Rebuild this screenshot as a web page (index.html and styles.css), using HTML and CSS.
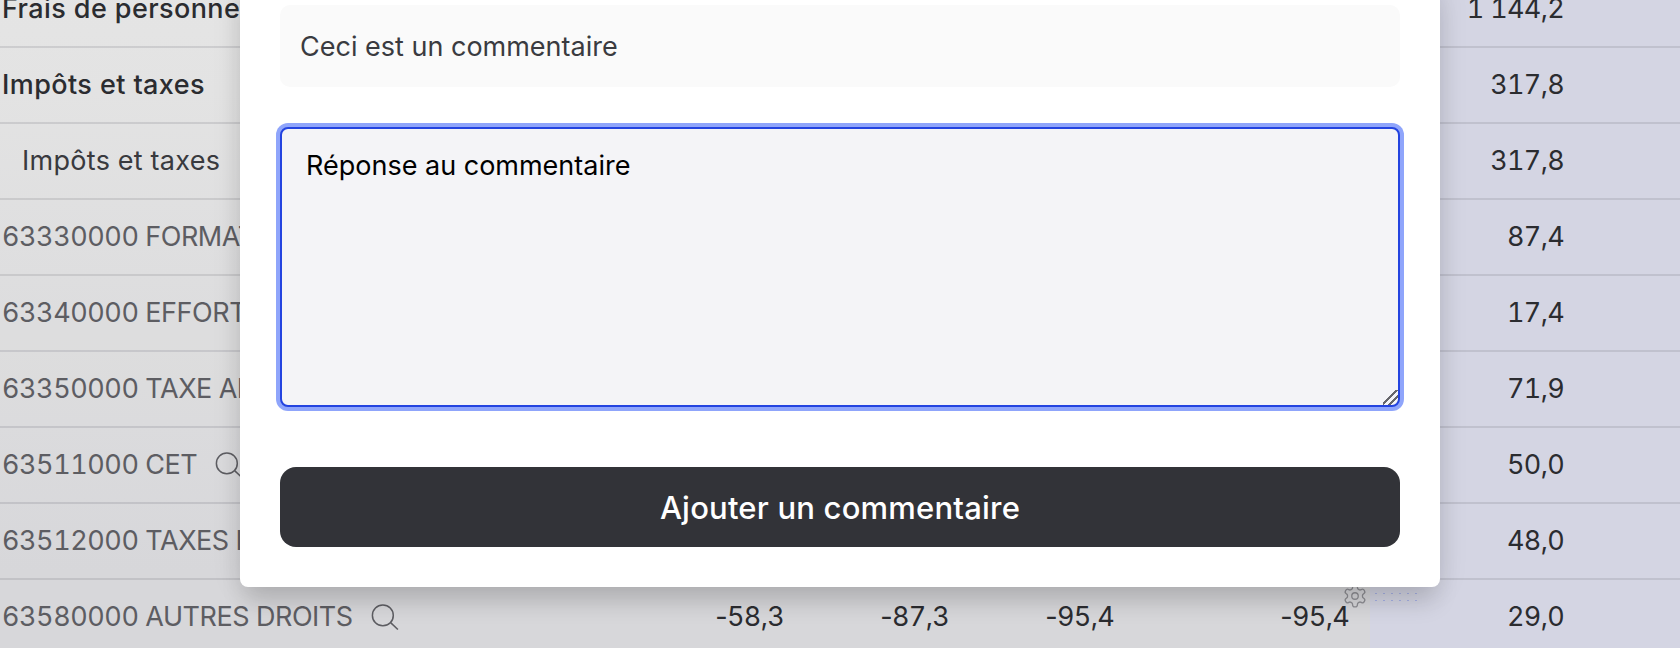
FILE: index.html
```html
<!DOCTYPE html>
<html lang="fr">
<head>
<meta charset="utf-8">
<title>Commentaires</title>
<link rel="stylesheet" href="styles.css">
</head>
<body>
<main class="table">
  <div class="row strong"><span class="name">Frais de personnel</span><span></span><span></span><span></span><span></span><span></span><span class="num total">1 144,2</span></div>
  <div class="row strong"><span class="name">Impôts et taxes</span><span></span><span></span><span></span><span></span><span></span><span class="num total">317,8</span></div>
  <div class="row"><span class="name sub">Impôts et taxes</span><span></span><span></span><span></span><span></span><span></span><span class="num total">317,8</span></div>
  <div class="row"><span class="name acc">63330000 FORMATION</span><span></span><span></span><span></span><span></span><span></span><span class="num total">87,4</span></div>
  <div class="row"><span class="name acc">63340000 EFFORT</span><span></span><span></span><span></span><span></span><span></span><span class="num total">17,4</span></div>
  <div class="row"><span class="name acc">63350000 TAXE APPRENTISSAGE</span><span></span><span></span><span></span><span></span><span></span><span class="num total">71,9</span></div>
  <div class="row"><span class="name acc">63511000 CET<svg class="search" viewBox="0 0 26 24"><circle cx="11" cy="10.5" r="9.7"/><path d="M18.2 17.2 25 23.6"/></svg></span><span></span><span></span><span></span><span></span><span></span><span class="num total">50,0</span></div>
  <div class="row"><span class="name acc">63512000 TAXES FONCIÈRES</span><span></span><span></span><span></span><span></span><span></span><span class="num total">48,0</span></div>
  <div class="row last"><span class="name acc">63580000 AUTRES DROITS<svg class="search" viewBox="0 0 26 24"><circle cx="11" cy="10.5" r="9.7"/><path d="M18.2 17.2 25 23.6"/></svg></span><span class="num"><b class="minus">-</b>58,3</span><span class="num"><b class="minus">-</b>87,3</span><span class="num"><b class="minus">-</b>95,4</span><span class="num"><b class="minus">-</b>95,4</span><span></span><span class="num total">29,0</span>
    <svg class="gear" viewBox="0 0 24 24"><path d="M12.22 2h-.44a2 2 0 0 0-2 2v.18a2 2 0 0 1-1 1.73l-.43.25a2 2 0 0 1-2 0l-.15-.08a2 2 0 0 0-2.73.73l-.22.38a2 2 0 0 0 .73 2.73l.15.1a2 2 0 0 1 1 1.72v.51a2 2 0 0 1-1 1.74l-.15.09a2 2 0 0 0-.73 2.73l.22.38a2 2 0 0 0 2.73.73l.15-.08a2 2 0 0 1 2 0l.43.25a2 2 0 0 1 1 1.73V20a2 2 0 0 0 2 2h.44a2 2 0 0 0 2-2v-.18a2 2 0 0 1 1-1.73l.43-.25a2 2 0 0 1 2 0l.15.08a2 2 0 0 0 2.73-.73l.22-.39a2 2 0 0 0-.73-2.73l-.15-.08a2 2 0 0 1-1-1.74v-.5a2 2 0 0 1 1-1.74l.15-.09a2 2 0 0 0 .73-2.73l-.22-.38a2 2 0 0 0-2.73-.73l-.15.08a2 2 0 0 1-2 0l-.43-.25a2 2 0 0 1-1-1.73V4a2 2 0 0 0-2-2z"/><circle cx="12" cy="12" r="3"/></svg>
    <i class="dots"></i>
  </div>
</main>
<div class="overlay"></div>
<section class="modal">
  <p class="comment">Ceci est un commentaire</p>
  <textarea class="reply">Réponse au commentaire</textarea>
  <button class="submit">Ajouter un commentaire</button>
</section>
</body>
</html>
```
FILE: styles.css
```css
* { box-sizing: border-box; }
html, body { margin: 0; height: 648px; overflow: hidden; }
body { position: relative; font-family: Inter, "Liberation Sans", sans-serif; color: #303136; }

.table {
  margin-top: -29px;
  background:
    linear-gradient(to right, transparent 1370px, #edeefd 1370px),
    linear-gradient(to bottom, #ffffff 0, #fdfdfd 120px, #f0f0f3 600px);
}
.row {
  display: grid;
  grid-template-columns: 620px 164px 165px 165px 235px 21px 310px;
  align-items: center;
  height: 76px;
  border-bottom: 2px solid rgba(60, 60, 80, .13);
  font-size: 27px;
  font-variant-numeric: tabular-nums;
  position: relative;
  top: 1px;
}
.row > span { display: flex; align-items: center; white-space: nowrap; padding-bottom: 1px; }
.num { justify-content: flex-end; letter-spacing: -.7px; }
.minus { font-weight: 400; font-variant-numeric: normal; }
.total { padding-right: 116px; }
.name { padding-left: 2px; letter-spacing: .3px; }
.strong .name { font-weight: 500; letter-spacing: .4px; }
.sub { padding-left: 22px; color: #404146; }
.acc { color: #68686e; letter-spacing: -.45px; }
.search { width: 28px; height: 26px; margin-left: 18px; fill: none; stroke: #68686e; stroke-width: 1.4; }
.gear { position: absolute; left: 1342px; top: 3px; width: 26px; height: 26px; fill: none; stroke: #a0a0a6; stroke-width: 1.2; }
.dots {
  position: absolute; left: 1372px; top: 10px; width: 48px; height: 16px;
  background: radial-gradient(circle, rgba(90, 120, 255, .35) 0 .7px, transparent 1px) 0 0 / 8px 7px;
}

.overlay { position: absolute; inset: 0; background: rgba(0, 0, 0, .1); }
.modal {
  position: absolute;
  left: 240px; top: -20px; bottom: 61px; width: 1200px;
  display: flex; flex-direction: column;
  padding: 25px 40px 40px;
  background: #fff;
  border-radius: 8px;
  box-shadow: 0 20px 25px -5px rgba(0, 0, 0, .14), 0 0 30px rgba(0, 0, 0, .1);
}
.comment {
  margin: 0 0 40px; height: 82px; padding: 0 20px;
  display: flex; align-items: center;
  background: #fafafa; border-radius: 10px;
  font-size: 27px; color: #3a3b40;
}
.reply {
  display: block; width: 100%; height: 280px; margin: 0 0 60px;
  padding: 19px 24px;
  background: #f4f4f7; border: 2.5px solid #2343e0; border-radius: 8px;
  box-shadow: 0 0 0 4px #8fa5fb; outline: none;
  font: 27px/36px Inter, "Liberation Sans", sans-serif; color: #000;
}
.reply::-webkit-resizer {
  background: linear-gradient(135deg, transparent 0 42%, #66666b 42% 52%, transparent 52% 66%, #66666b 66% 76%, transparent 76%);
}
.submit {
  height: 80px; border: 0; border-radius: 16px;
  background: #323338; color: #fff;
  font: 500 31px Inter, "Liberation Sans", sans-serif; letter-spacing: .2px;
}
```
